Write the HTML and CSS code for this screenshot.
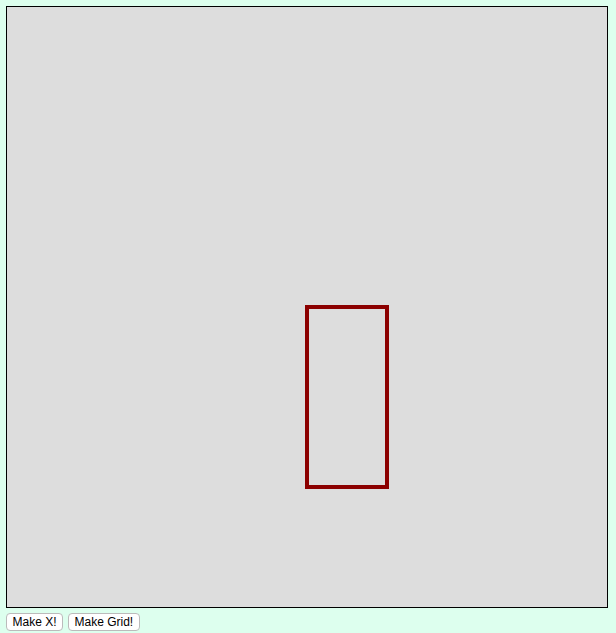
FILE: index.html
```html
<!DOCTYPE html>
<html>
<head>
<meta charset="utf-8">
<link rel="stylesheet" href="styles.css">
</head>
<body>
<div class="stage">
  <svg class="canvas" width="600" height="600" viewBox="0 0 600 600">
    <rect x="300" y="300" width="80" height="180" fill="none" stroke="#8b0000" stroke-width="4"/>
  </svg>
</div>
<div class="controls">
  <button class="btn">Make X!</button>
  <button class="btn">Make Grid!</button>
</div>
</body>
</html>
```
FILE: styles.css
```css
html, body {
  margin: 0;
  padding: 0;
}
body {
  background: #ddffee;
  padding: 6px;
  font-family: "Liberation Sans", Arial, sans-serif;
}
.stage {
  width: 600px;
  height: 600px;
  border: 1px solid #000;
  background: #dddddd;
}
.canvas {
  display: block;
}
.controls {
  display: flex;
  gap: 5px;
  margin-top: 5px;
}
.btn {
  font-family: "Liberation Sans", Arial, sans-serif;
  font-size: 12px;
  height: 18px;
  padding: 0 5.5px;
  background: #fff;
  border: 1px solid #bbbbbb;
  border-radius: 4px;
  color: #000;
  line-height: 16px;
}
```
